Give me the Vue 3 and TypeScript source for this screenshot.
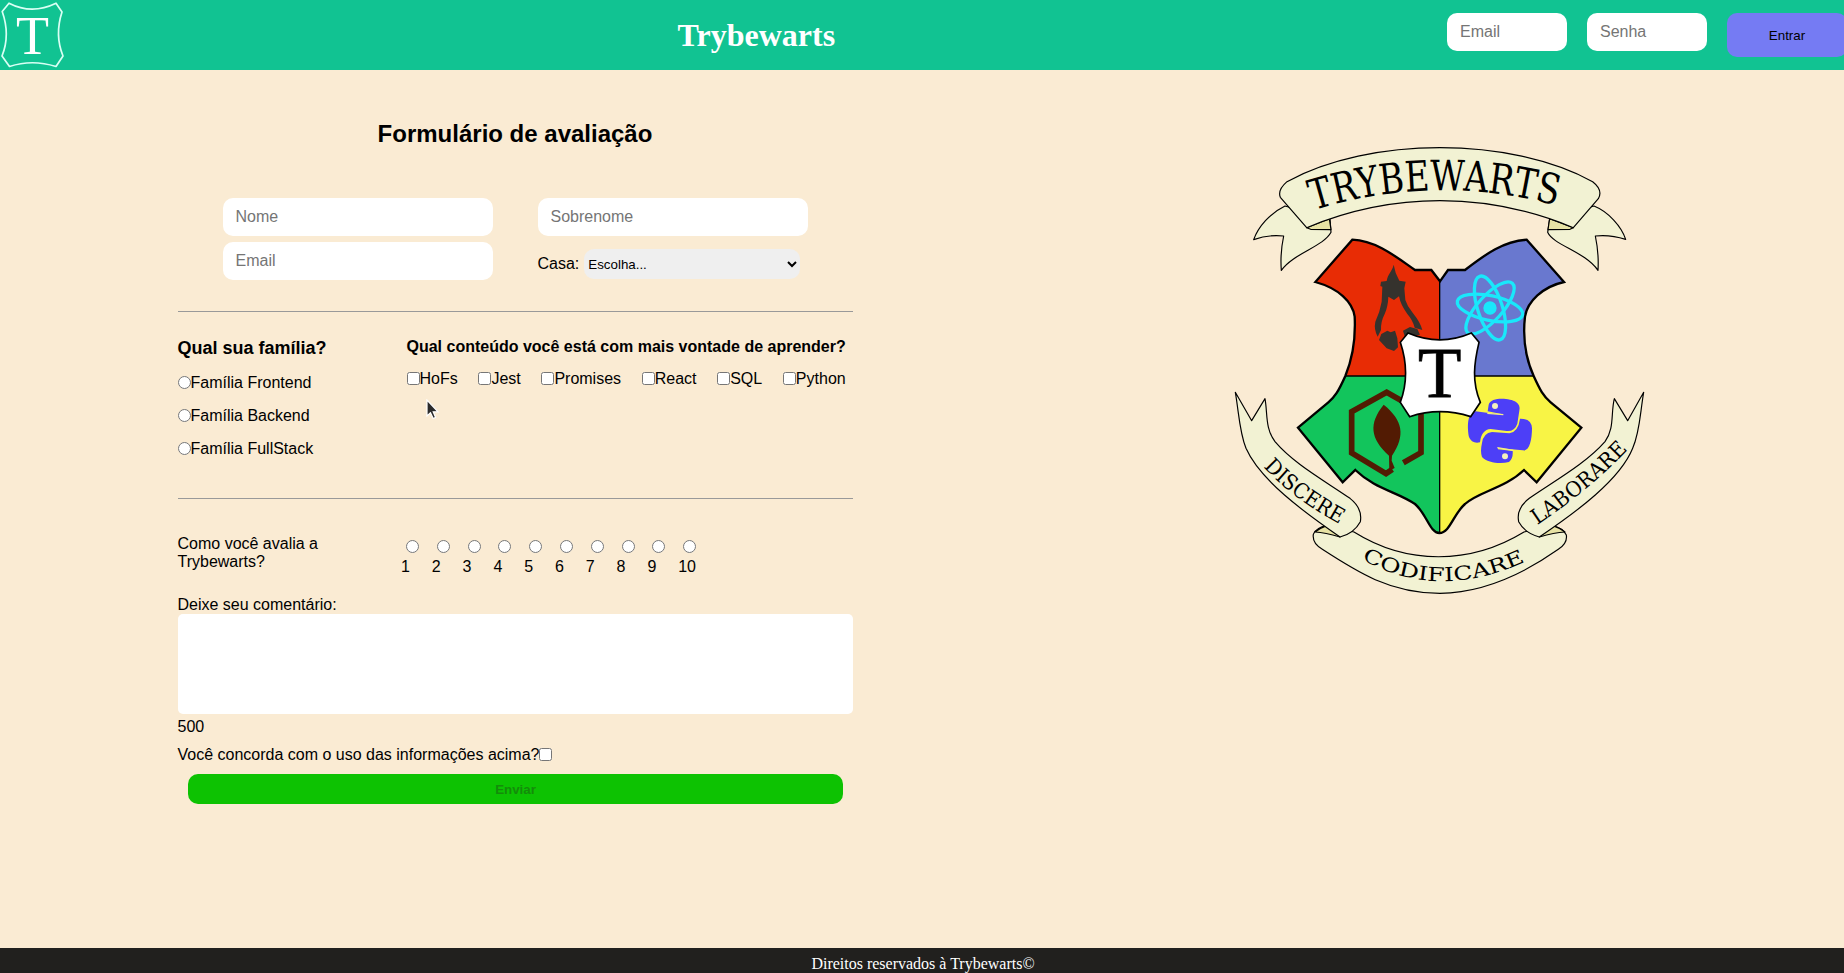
<script setup lang="ts">
import { ref, computed } from 'vue'

const houses: string[] = ['Gitnória', 'Reactpuff', 'Corvinode', 'Pytherina']
const families: string[] = ['Frontend', 'Backend', 'FullStack']
const subjects: string[] = ['HoFs', 'Jest', 'Promises', 'React', 'SQL', 'Python']
const rates: number[] = Array.from({ length: 10 }, (_, i) => i + 1)

const maxLength = 500
const comment = ref('')
const house = ref('')
const agreed = ref(false)
const remaining = computed<number>(() => maxLength - comment.value.length)
</script>

<template>
  <div class="page">
    <header class="header">
      <svg class="logo" viewBox="0 0 64 70" aria-hidden="true">
        <path
          d="M9 3.2 Q32 15 56 3.2 L62 12 Q54.500 35 63 56 L56 66.500 Q32 59 9.500 66.500 L2 56 Q10.500 35 2.200 11.500 Z"
          fill="none" stroke="#d9fff4" stroke-width="1.7" stroke-linejoin="round"
        />
        <text x="32.500" y="54" text-anchor="middle">T</text>
      </svg>
      <h1 class="title">Trybewarts</h1>
      <form class="login" @submit.prevent>
        <input class="field short" type="text" placeholder="Email">
        <input class="field short" type="password" placeholder="Senha">
        <button class="enter" type="submit">Entrar</button>
      </form>
    </header>

    <main class="main">
      <form class="form" @submit.prevent>
        <h2 class="form-title">Formulário de avaliação</h2>
        <div class="person">
          <input class="field" type="text" placeholder="Nome">
          <input class="field" type="text" placeholder="Sobrenome">
          <input class="field" type="email" placeholder="Email">
          <label class="house">Casa:
            <select v-model="house">
              <option value="">Escolha...</option>
              <option v-for="h in houses" :key="h" :value="h">{{ h }}</option>
            </select>
          </label>
        </div>

        <div class="choices">
          <div class="families">
            <h3>Qual sua família?</h3>
            <label v-for="f in families" :key="f"><input type="radio" name="family" :value="f">Família {{ f }}</label>
          </div>
          <div class="subjects">
            <h4>Qual conteúdo você está com mais vontade de aprender?</h4>
            <div class="subject-list">
              <label v-for="s in subjects" :key="s"><input type="checkbox" :value="s">{{ s }}</label>
            </div>
          </div>
        </div>

        <div class="rating">
          <p>Como você avalia a Trybewarts?</p>
          <div class="rates">
            <label v-for="n in rates" :key="n"><input type="radio" name="rate" :value="n"><span>{{ n }}</span></label>
          </div>
        </div>

        <label class="comment">Deixe seu comentário:
          <textarea v-model="comment" :maxlength="maxLength"></textarea>
        </label>
        <span class="counter">{{ remaining }}</span>
        <label class="agree">Você concorda com o uso das informações acima?<input v-model="agreed" type="checkbox"></label>
        <button class="send" type="submit" :disabled="!agreed">Enviar</button>
      </form>

      <svg class="crest" viewBox="0 0 1290 1440" role="img" aria-label="Trybewarts">
        <defs>
          <path id="arc-top" d="M280 241 Q655 125 1030 233" />
          <path id="arc-left" d="M130 1011 Q215 1104 364 1185" />
          <path id="arc-right" d="M952 1185 Q1112 1078 1230 952" />
          <path id="arc-bottom" d="M430 1290 Q660 1418 930 1288" />
        </defs>

        <!-- top ribbon -->
        <g class="ribbon">
          <path d="M195 228 C150 250 115 290 101 329 Q145 313 191 318 Q180 370 184 421 C220 370 310 350 333 307 L330 266 Z" />
          <path d="M1122 228 C1165 245 1205 290 1217 328 Q1170 313 1126 318 Q1137 370 1134 421 C1095 365 1000 345 983 307 L989 266 Z" />
          <path class="fold" d="M260 293 L328 266 L333 299 L272 298 Z" />
          <path class="fold" d="M1060 293 L989 266 L984 299 L1050 298 Z" />
          <path d="M260 293 L181 202 Q172 180 201 155 C450 19 870 19 1118 155 Q1150 180 1135 206 L1060 293 C800 185 520 185 260 293 Z" />
        </g>

        <!-- lower ribbons -->
        <g class="ribbon">
          <path d="M280 1213 Q276 1240 307 1258 C410 1325 510 1390 660 1390 C800 1388 920 1325 1015 1258 Q1043 1240 1039 1215 Q1030 1194 995 1186 L912 1206 C750 1305 560 1305 402 1206 L322 1186 Q286 1194 280 1213 Z" />
          <path class="fold" d="M285 1206 Q300 1194 322 1186 Q350 1198 360 1221 Q315 1208 285 1206 Z" />
          <path class="fold" d="M1035 1206 Q1020 1194 997 1186 Q968 1198 958 1221 Q1003 1208 1035 1206 Z" />
          <path d="M46 787 L95 872 L135 806 C143 850 135 895 165 935 C220 1000 310 1050 390 1105 Q428 1135 421 1175 Q402 1210 360 1221 C250 1145 120 1050 78 955 C58 905 57 850 46 787 Z" />
          <path d="M1271 787 L1223 872 L1183 806 C1172 850 1184 895 1155 935 C1098 1000 1008 1050 928 1105 Q888 1135 896 1175 Q915 1210 958 1221 C1070 1145 1200 1050 1238 955 C1260 905 1260 850 1271 787 Z" />
        </g>

        <!-- shield quarters -->
        <path fill="#e82c05" d="M660 738 H376 C400 680 407 620 404 560 C398 515 355 475 286 456 L397 329 C470 332 530 382 585 420 H634 L660 454 Z" />
        <path fill="#6978cf" d="M660 738 H941 C915 680 908 620 915 560 C922 515 968 470 1032 456 L920 329 C850 334 800 370 735 420 H684 L660 454 Z" />
        <path fill="#12c55c" d="M660 738 H376 C355 785 345 800 325 817 L234 893 L368 1057 L406 1020 C465 1077 530 1085 585 1122 C620 1152 630 1208 660 1209 Z" />
        <path fill="#f8f445" d="M660 738 H941 C960 780 970 798 992 817 L1084 893 L950 1057 L912 1020 C855 1075 775 1085 735 1122 C700 1152 690 1208 660 1209 Z" />
        <path
          fill="none" stroke="#000" stroke-width="7"
          d="M397 329 C470 332 530 382 585 420 H634 L660 454 L684 420 H735 C800 370 850 334 920 329 L1032 456 C968 470 922 515 915 560 C908 620 915 680 941 738 C960 780 970 798 992 817 L1084 893 L950 1057 L912 1020 C855 1075 775 1085 735 1122 C700 1152 690 1209 658 1209 C630 1209 620 1152 585 1122 C530 1085 465 1077 406 1020 L368 1057 L234 893 L325 817 C345 800 355 785 376 738 C400 680 407 620 404 560 C398 515 355 475 286 456 Z"
        />
        <path d="M659 454 V1209 M376 738 H941" fill="none" stroke="#000" stroke-width="4" />

        <!-- flame -->
        <g fill="#35322d">
          <path d="M521 404 Q525 430 538 452 L557 455 L553 475 L556 510 Q562 530 578 548 Q602 578 607 600 L584 593 Q578 570 562 552 Q542 525 537 499 L522 510 L505 500 Q504 530 494 552 Q482 575 483 600 L473 620 Q461 598 466 575 Q480 545 485 515 L487 470 L481 468 L483 455 L500 453 C504 430 516 425 521 404 Z" />
          <path d="M484 612 L502 602 L512 607 L525 602 L532 625 L534 652 L522 663 L500 655 L477 630 Z" />
          <path d="M549 602 L570 591 L592 597 L600 614 L555 622 Z" />
        </g>

        <!-- atom -->
        <g fill="none" stroke="#19e8fb" stroke-width="10">
          <ellipse cx="810" cy="534" rx="100" ry="37" transform="rotate(12 810 534)" />
          <ellipse cx="810" cy="534" rx="100" ry="37" transform="rotate(72 810 534)" />
          <ellipse cx="810" cy="534" rx="100" ry="37" transform="rotate(132 810 534)" />
          <circle cx="810" cy="534" r="15" fill="#19e8fb" />
        </g>

        <!-- leaf in hexagon -->
        <g fill="#521b03">
          <path d="M550 998 L603 968 V845 L500 787 L395 845 V969 L498 1031 L517 1018" fill="none" stroke="#521b03" stroke-width="17" />
          <path d="M491 824 C548 870 558 915 516 977 L515 992 L524 1014 L508 1022 L507 977 C450 925 446 880 491 824 Z" />
        </g>

        <!-- intertwined snakes -->
        <g fill="#4d3ff7">
          <path d="M848 853 L803 844 L806 824 C812 800 870 804 888 816 Q902 825 898 842 L892 881 Q884 905 860 903 L812 897 Q784 899 780 937 Q755 942 747 921 C742 895 740 848 766 844 L846 854 Z" />
          <path d="M900 866 Q935 865 936 895 C936 930 928 966 908 961 L834 954 V958 L878 963 Q880 985 867 996 C840 1003 802 998 786 981 Q780 965 786 939 Q790 909 816 906 L868 910 Q895 905 900 866 Z" />
          <path d="M802 850 L850 854" stroke="#f4ec88" stroke-width="4" />
          <path d="M832 953 L880 961" stroke="#f4ec88" stroke-width="4" />
          <circle cx="825" cy="828" r="9" fill="#f4f0bd" />
          <circle cx="855" cy="979" r="9" fill="#f4f0bd" />
        </g>

        <!-- center shield -->
        <path
          fill="#fff" stroke="#000" stroke-width="5"
          d="M564 609 Q660 650 754 609 L777 637 C762 700 755 755 781 817 L752 860 Q660 830 569 860 L541 817 C562 760 562 700 541 637 Z"
        />
        <text class="center-letter" x="659" y="802" text-anchor="middle">T</text>

        <text class="motto top"><textPath href="#arc-top" textLength="740" lengthAdjust="spacingAndGlyphs">TRYBEWARTS</textPath></text>
        <text class="motto small"><textPath href="#arc-left" textLength="287" lengthAdjust="spacingAndGlyphs">DISCERE</textPath></text>
        <text class="motto small"><textPath href="#arc-right" textLength="354" lengthAdjust="spacingAndGlyphs">LABORARE</textPath></text>
        <text class="motto wide"><textPath href="#arc-bottom" startOffset="-6" textLength="512" lengthAdjust="spacingAndGlyphs">CODIFICARE</textPath></text>
      </svg>
    </main>

    <footer class="footer">Direitos reservados à Trybewarts©</footer>

    <svg class="pointer" viewBox="0 0 14 22" aria-hidden="true">
      <path d="M1 1 V17 L4.500 13.800 L7.200 19.500 L9.600 18.400 L7.200 12.800 H12 Z" fill="#2b2b2b" stroke="#fff" stroke-width="1.200" />
    </svg>
  </div>
</template>

<style>
body {
  margin: 0;
  background: #faebd3;
}
</style>

<style scoped>
.page {
  display: flex;
  flex-direction: column;
  width: 100vw;
  height: 100vh;
  overflow: hidden;
  font: 16px "Liberation Sans", Arial, sans-serif;
  color: #000;
}
.header {
  display: flex;
  flex: none;
  height: 70px;
  background: #11c392;
}
.logo {
  flex: none;
  width: 64px;
  height: 70px;
}
.logo text {
  fill: #fff;
  font: 54px "Liberation Serif", serif;
}
.title {
  margin: 0 0 0 613.5px;
  font: bold 32px/71px "Liberation Serif", serif;
  color: #fff;
  width: 769.5px;
  flex: none;
}
.login {
  display: flex;
  flex: none;
  align-items: flex-start;
  gap: 20px;
  padding-top: 13px;
}
input, select, button, textarea {
  box-sizing: border-box;
  font-family: inherit;
}
input[type="radio"], input[type="checkbox"] {
  width: 13px;
  height: 13px;
  margin: 0;
}
.field {
  width: 270px;
  height: 38px;
  padding: 0 13px;
  border: 0;
  border-radius: 10px;
  background: #fff;
  font-size: 16px;
}
.field::placeholder {
  color: #757575;
}
.short {
  width: 120px;
}
.enter {
  width: 120px;
  height: 44px;
  border: 0;
  border-radius: 10px;
  background: #757bf3;
  font-size: 13.333px;
  color: #000;
}
.main {
  display: flex;
  flex: 1;
  min-height: 0;
}
.form {
  flex: none;
  width: 675px;
  margin-left: 177.5px;
}
.form-title {
  margin: 50px 0 0;
  font-size: 24px;
  line-height: 28px;
  text-align: center;
}
.person {
  display: grid;
  grid-template-columns: 270px 270px;
  gap: 6px 45px;
  height: 113px;
  align-content: start;
  margin-top: 50px;
  padding-left: 45px;
  border-bottom: 1px solid #999;
}
.house {
  display: flex;
  align-items: center;
  gap: 5px;
  padding-top: 6px;
}
.house select {
  width: 216px;
  height: 30px;
  border: 0;
  border-radius: 10px;
  background: #efefef;
  font-size: 13.333px;
}
.choices {
  display: flex;
  height: 186px;
  border-bottom: 1px solid #999;
}
.families {
  width: 229px;
}
.families h3 {
  margin: 26px 0 13px;
  font-size: 18px;
  line-height: 20px;
}
.families label {
  display: flex;
  align-items: center;
  height: 23px;
  margin-bottom: 10px;
}
.families input, .subjects input, .agree input {
  position: relative;
  top: -0.5px;
}
.subjects h4 {
  margin: 26px 0 12px;
  font-size: 16px;
  line-height: 18px;
  white-space: nowrap;
}
.subject-list {
  display: flex;
  justify-content: space-between;
}
.subject-list label {
  display: flex;
  align-items: center;
  line-height: 22px;
}
.rating {
  display: flex;
  padding-top: 36px;
  height: 60px;
}
.rating p {
  width: 160px;
  margin: 0;
  line-height: 18px;
}
.rates {
  display: flex;
  gap: 9px;
  margin-left: 63.5px;
  padding-top: 5px;
}
.rates label {
  display: flex;
  flex-direction: column;
  width: 21.800px;
}
.rates input {
  margin-left: 5px;
}
.rates span {
  line-height: 18px;
  margin-top: 5px;
}
.comment {
  display: block;
  line-height: 19px;
}
.comment textarea {
  display: block;
  width: 675px;
  height: 100px;
  border: 0;
  border-radius: 5px;
  resize: none;
  background: #fff;
}
.counter {
  display: block;
  margin-top: 3px;
  line-height: 20px;
}
.agree {
  display: flex;
  align-items: center;
  height: 20px;
  margin-top: 8px;
}
.send {
  display: block;
  width: 655px;
  height: 30px;
  margin: 9px 0 0 10.5px;
  border: 0;
  border-radius: 10px;
  background: #0dc202;
  font-size: 13.333px;
  font-weight: bold;
  color: #148c0a;
}
.crest {
  flex: none;
  width: 430px;
  height: 480px;
  margin: 60px 0 0 367.5px;
}
.ribbon path {
  fill: #f2f2d3;
  stroke: #000;
  stroke-width: 3.5;
  stroke-linejoin: round;
}
.ribbon .fold {
  fill: #e8e3a4;
}
.motto {
  font-family: "DejaVu Serif Condensed", "DejaVu Serif", serif;
  fill: #000;
}
.top {
  font-size: 126px;
}
.small {
  font-size: 64px;
}
.wide {
  font-size: 58px;
}
.center-letter {
  font: 213px "Liberation Serif", serif;
  stroke: #000;
  stroke-width: 2.5;
}
.footer {
  flex: none;
  height: 25px;
  box-sizing: border-box;
  padding-left: 2px;
  background: #21201e;
  color: #fff;
  font: 16px/32px "Liberation Serif", serif;
  text-align: center;
}
.pointer {
  position: absolute;
  left: 426px;
  top: 399px;
  width: 14px;
  height: 22px;
}
</style>
